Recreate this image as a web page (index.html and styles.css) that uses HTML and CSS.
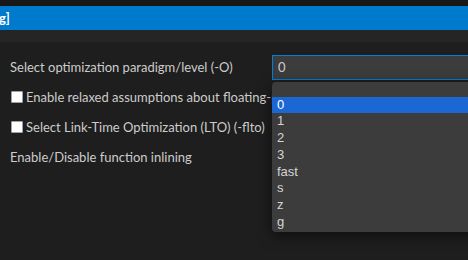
FILE: index.html
```html
<!DOCTYPE html>
<html lang="en">
  <head>
    <meta charset="UTF-8" />
    <title>Compiler Options</title>
    <link rel="stylesheet" href="styles.css">
  </head>
  <body>
    <div class="topstrip"></div>
    <div class="titlebar">g]</div>
    <div class="tabgap"></div>

    <div class="content">
      <div class="row">
        <label class="label" for="optLevel">Select optimization paradigm/level (-O)</label>
        <div class="select-wrap">
          <div class="select" id="optLevel">0</div>
          <ul class="dropdown">
            <li class="selected">0</li>
            <li>1</li>
            <li>2</li>
            <li>3</li>
            <li>fast</li>
            <li>s</li>
            <li>z</li>
            <li>g</li>
          </ul>
        </div>
      </div>

      <div class="row">
        <input type="checkbox" id="fastMath" class="check" />
        <label class="clipped" for="fastMath">Enable relaxed assumptions about floating-point arithmetic (-ffast-math)</label>
      </div>

      <div class="row">
        <input type="checkbox" id="lto" class="check" />
        <label for="lto">Select Link-Time Optimization (LTO) (-flto)</label>
      </div>

      <div class="row">
        <label class="label">Enable/Disable function inlining</label>
      </div>
    </div>
  </body>
</html>
```

FILE: styles.css
```css
* {
  margin: 0;
  padding: 0;
  box-sizing: border-box;
}

body {
  font-family: "Lato", "Noto Sans", sans-serif;
  font-size: 13px;
  background-color: #1e1e1e;
  color: #cccccc;
  width: 468px;
  height: 260px;
  overflow: hidden;
}

.topstrip {
  height: 6px;
  background-color: #181818;
}

.titlebar {
  height: 24px;
  background-color: #007acc;
  color: #ffffff;
  font-weight: bold;
  line-height: 24px;
  margin-left: -1px;
  white-space: nowrap;
}

.tabgap {
  height: 12px;
  background-color: #252526;
}

.content {
  padding: 10px 0 0 10px;
}

.row {
  display: flex;
  align-items: center;
  height: 30px;
  white-space: nowrap;
}

.label {
  width: 262px;
  flex-shrink: 0;
}

.clipped {
  width: 246px;
  overflow: hidden;
}

.check {
  appearance: none;
  width: 12px;
  height: 12px;
  margin: 0 3px 0 1px;
  background-color: #ffffff;
  border: 1px solid #a0a0a0;
  border-radius: 1px;
  flex-shrink: 0;
}

.select-wrap {
  position: relative;
  flex-shrink: 0;
}

.select {
  width: 220px;
  height: 25px;
  padding-left: 5px;
  line-height: 23px;
  background-color: #3c3c3c;
  border: 1px solid #007fd4;
  color: #cccccc;
}

.dropdown {
  position: absolute;
  top: 27px;
  left: 0;
  width: 220px;
  padding-top: 15px;
  padding-bottom: 1px;
  list-style: none;
  background-color: #3c3c3c;
  border-radius: 4px 0 0 4px;
  box-shadow: 0 4px 14px rgba(0, 0, 0, 0.55);
  font-family: "Liberation Sans", Arial, sans-serif;
  font-size: 13px;
  z-index: 10;
}

.dropdown li {
  height: 16.75px;
  line-height: 16.75px;
  padding-left: 5px;
  color: #d4d4d4;
}

.dropdown li.selected {
  background-color: #1b68d4;
  color: #ffffff;
}
```
